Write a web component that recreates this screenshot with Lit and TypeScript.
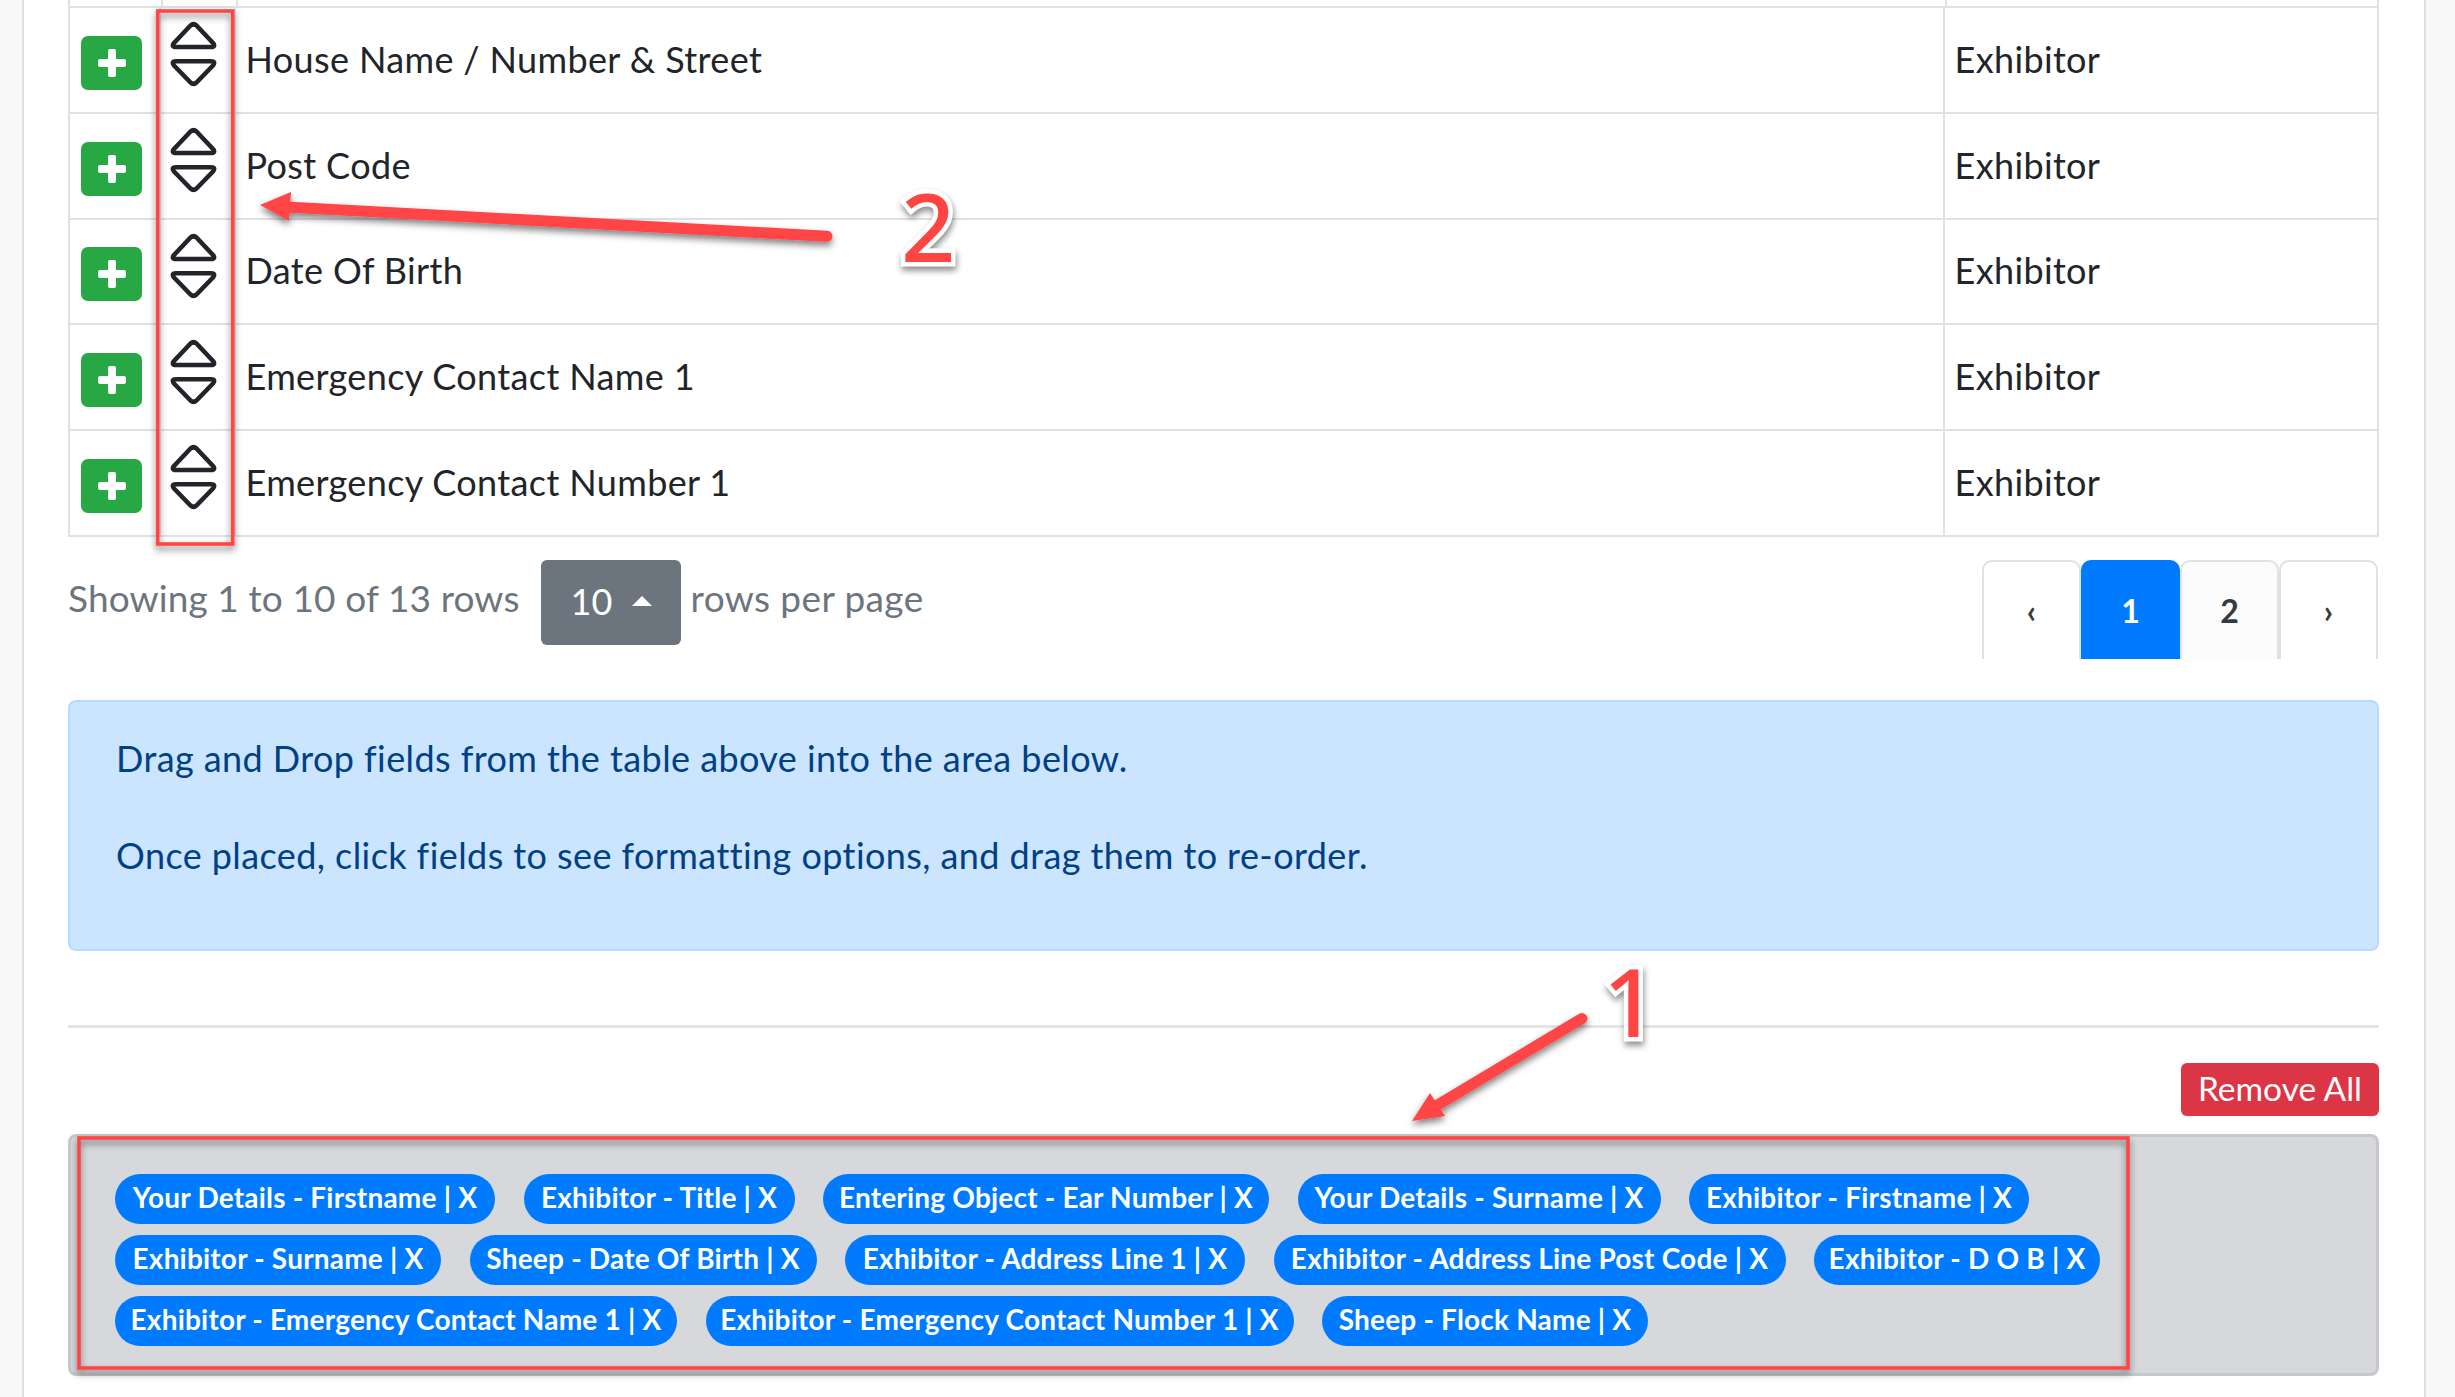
import { LitElement, html, css } from "lit";
import { customElement } from "lit/decorators.js";

const ROWS = ["House Name / Number & Street", "Post Code", "Date Of Birth", "Emergency Contact Name 1", "Emergency Contact Number 1"];
const CHIPS: [string, number][][] = [
  [["Your Details - Firstname", 380], ["Exhibitor - Title", 271], ["Entering Object - Ear Number", 446], ["Your Details - Surname", 363], ["Exhibitor - Firstname", 340]],
  [["Exhibitor - Surname", 326], ["Sheep - Date Of Birth", 347], ["Exhibitor - Address Line 1", 400], ["Exhibitor - Address Line Post Code", 512], ["Exhibitor - D O B", 286]],
  [["Exhibitor - Emergency Contact Name 1", 562], ["Exhibitor - Emergency Contact Number 1", 588], ["Sheep - Flock Name", 326]],
];

@customElement("app-root")
export class AppRoot extends LitElement {
  static styles = css`
    :host { display: block; width: 2455px; height: 1397px; overflow: hidden; position: relative; background: #f8f8f8; font-family: "Lato", "Noto Sans", sans-serif; color: #212529; }
    .sheet { box-sizing: border-box; margin-left: 22px; width: 2404px; height: 1397px; background: #fff; border-left: 2px solid #dedede; border-right: 2px solid #dedede; padding: 0 45px 0 44px; display: flex; flex-direction: column; }
    .stub { display: grid; grid-template-columns: 91px 75px 1709px 1fr; height: 6px; border-left: 2px solid #dee2e6; border-right: 2px solid #dee2e6; box-sizing: border-box; }
    .stub div + div { border-left: 2px solid #dee2e6; }
    table { border-collapse: separate; border-spacing: 0; table-layout: fixed; width: 100%; }
    td { box-sizing: border-box; height: 105.75px; padding: 0; border-top: 2px solid #dee2e6; vertical-align: middle; }
    td + td { border-left: 2px solid #dee2e6; }
    tr td:first-child { border-left: 2px solid #dee2e6; }
    tr td:last-child { border-right: 2px solid #dee2e6; }
    tr:last-child td { border-bottom: 2px solid #dee2e6; height: 107.5px; }
    .c1 { width: 91px; } .c2 { width: 75px; } .c4 { width: 436px; }
    .label { font-size: 36px; padding-left: 9.5px; position: relative; top: -1px; letter-spacing: .36px; white-space: nowrap; }
    .add { display: flex; align-items: center; justify-content: center; box-sizing: border-box; width: 61px; height: 54px; margin: 6px 0 0 11px; background: #28a745; border-radius: 7px; }
    .updown { display: block; margin: -12px 0 0 8px; }
    .bar { display: flex; align-items: flex-start; height: 163.5px; padding-top: 23.5px; box-sizing: border-box; }
    .info { font-size: 37px; color: #6c757d; line-height: 76px; white-space: nowrap; letter-spacing: .12px; }
    .info.after { letter-spacing: .4px; }
    .drop { box-sizing: border-box; width: 140px; height: 85px; margin: 0 10px 0 21px; background: #6c757d; border-radius: 6px; color: #fff; font-size: 36px; display: flex; align-items: center; padding: 0 0 4px 30px; gap: 20px; }
    .caret { width: 0; height: 0; border-left: 10px solid transparent; border-right: 10px solid transparent; border-bottom: 10px solid #fff; }
    .pager { margin: 0 1px 0 auto; display: flex; height: 99px; overflow: hidden; }
    .page { box-sizing: border-box; width: 99px; height: 108px; border: 2px solid #dee2e6; border-radius: 10px; display: flex; justify-content: center; padding-top: 29px; font-size: 32px; font-weight: 700; color: #343a40; }
    .page.active { background: #007bff; border-color: #007bff; color: #fff; }
    .page.alt { background: #fbfbfb; }
    .alert { box-sizing: border-box; height: 251px; background: #cce5ff; border: 2px solid #b8daff; border-radius: 8px; color: #004085; font-size: 36px; padding: 8px 46px; line-height: 97px; letter-spacing: .42px; white-space: nowrap; }
    .rule { height: 3px; background: #e5e5e5; margin-top: 74px; }
    .actions { display: flex; justify-content: flex-end; margin-top: 35px; height: 71px; }
    .remove { box-sizing: border-box; width: 198px; height: 53px; background: #dc3545; color: #fff; border-radius: 6px; font-size: 33.5px; padding-bottom: 3px; display: flex; align-items: center; justify-content: center; }
    .area { box-sizing: border-box; height: 242px; background: #d6d8db; border: 3px solid #c6c8ca; border-radius: 8px; padding: 37px 0 0 44px; display: flex; flex-direction: column; gap: 11px; }
    .chips { display: flex; gap: 28.5px; }
    .chip { box-sizing: border-box; height: 50px; border-radius: 25px; background: #007bff; color: #fff; font-size: 28px; font-weight: 700; letter-spacing: .2px; padding-bottom: 5px; display: flex; align-items: center; justify-content: center; white-space: nowrap; }
    .overlay { position: absolute; left: 0; top: 0; pointer-events: none; }
    .num { position: absolute; color: #ff4444; font-family: "Noto Sans", sans-serif; font-weight: 500; font-size: 95px; line-height: 1; -webkit-text-stroke: 9px #fff; paint-order: stroke fill; filter: drop-shadow(1px 4px 3px rgba(0,0,0,.45)); }
    .n2 { left: 901px; top: 178px; }
    .n1 { left: 1603px; top: 953px; }
  `;

  private updown() {
    return html`<svg class="updown" width="49" height="67" viewBox="0 0 49 67" fill="none" stroke="#212529" stroke-width="4.6" stroke-linejoin="round"><path d="M21.5 5.5 Q24.5 3 27.5 5.5 L44 23 Q47 27 42 27 H7 Q2 27 5 23 Z"/><path d="M7 41.3 H42 Q47 41.3 44 45.5 L27.5 62.5 Q24.5 65 21.5 62.5 L5 45.5 Q2 41.3 7 41.3 Z"/></svg>`;
  }

  render() {
    return html`
      <div class="sheet">
        <div class="stub"><div></div><div></div><div></div><div></div></div>
        <table>
          ${ROWS.map((r) => html`<tr>
            <td class="c1"><div class="add"><svg width="28" height="28" viewBox="0 0 28 28" fill="#fff"><rect x="10" y="0" width="8" height="28" rx="2"/><rect x="0" y="10" width="28" height="8" rx="2"/></svg></div></td>
            <td class="c2">${this.updown()}</td>
            <td class="c3"><div class="label">${r}</div></td>
            <td class="c4"><div class="label">Exhibitor</div></td>
          </tr>`)}
        </table>
        <div class="bar">
          <span class="info">Showing 1 to 10 of 13 rows</span>
          <div class="drop"><span>10</span><span class="caret"></span></div>
          <span class="info after">rows per page</span>
          <div class="pager">
            <div class="page">‹</div><div class="page active">1</div><div class="page alt">2</div><div class="page">›</div>
          </div>
        </div>
        <div class="alert">Drag and Drop fields from the table above into the area below.<br />Once placed, click fields to see formatting options, and drag them to re-order.</div>
        <div class="rule"></div>
        <div class="actions"><div class="remove">Remove All</div></div>
        <div class="area">
          ${CHIPS.map((row) => html`<div class="chips">${row.map(([c, w]) => html`<div class="chip" style="width:${w}px">${c} | X</div>`)}</div>`)}
        </div>
      </div>
      <svg class="overlay" width="2455" height="1397" fill="none">
        <defs><filter id="s" x="-20%" y="-20%" width="140%" height="140%"><feDropShadow dx="0" dy="4" stdDeviation="3.5" flood-color="#000" flood-opacity=".5"/></filter></defs>
        <g filter="url(#s)">
          <rect x="157.7" y="11" width="75" height="533" stroke="#ff4444" stroke-width="3.6"/>
          <rect x="79" y="1138" width="2049" height="230" stroke="#ff4444" stroke-width="3.6"/>
          <path d="M827 236.3 L286 207" stroke="#ff4444" stroke-width="11" stroke-linecap="round"/>
          <path d="M260 205 L291 192 L289 221 Z" fill="#ff4444"/>
          <path d="M1582 1018.5 L1436 1106" stroke="#ff4444" stroke-width="11" stroke-linecap="round"/>
          <path d="M1412 1121 L1430 1093 L1445 1116 Z" fill="#ff4444"/>
        </g>
      </svg>
      <div class="overlay">
        <div class="num n2">2</div>
        <div class="num n1">1</div>
      </div>
    `;
  }
}
